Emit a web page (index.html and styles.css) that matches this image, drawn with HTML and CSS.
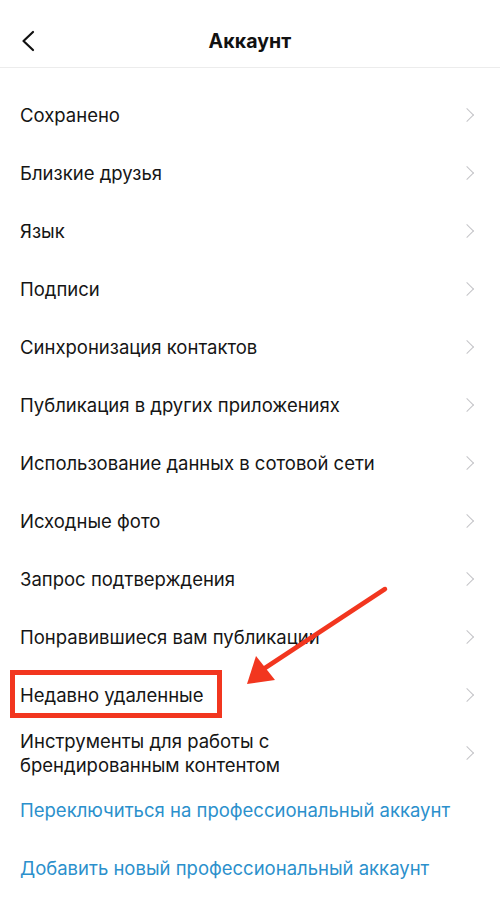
FILE: index.html
```html
<!DOCTYPE html>
<html lang="ru">
<head>
<meta charset="utf-8">
<title>Аккаунт</title>
<link rel="stylesheet" href="styles.css">
</head>
<body>
<div class="screen">
  <header class="header">
    <svg class="back" width="16" height="22" viewBox="0 0 16 22"><path d="M13 2 L3.5 11 L13 20" fill="none" stroke="#111" stroke-width="2.2" stroke-linecap="round" stroke-linejoin="round"/></svg>
    <h1 class="title">Аккаунт</h1>
  </header>
  <ul class="list">
    <li class="row"><span class="label">Сохранено</span><span class="chev"></span></li>
    <li class="row"><span class="label">Близкие друзья</span><span class="chev"></span></li>
    <li class="row"><span class="label">Язык</span><span class="chev"></span></li>
    <li class="row"><span class="label">Подписи</span><span class="chev"></span></li>
    <li class="row"><span class="label">Синхронизация контактов</span><span class="chev"></span></li>
    <li class="row"><span class="label">Публикация в других приложениях</span><span class="chev"></span></li>
    <li class="row"><span class="label">Использование данных в сотовой сети</span><span class="chev"></span></li>
    <li class="row"><span class="label">Исходные фото</span><span class="chev"></span></li>
    <li class="row"><span class="label">Запрос подтверждения</span><span class="chev"></span></li>
    <li class="row"><span class="label">Понравившиеся вам публикации</span><span class="chev"></span></li>
    <li class="row"><span class="label">Недавно удаленные</span><span class="chev"></span></li>
    <li class="row row-two"><span class="label">Инструменты для работы с<br>брендированным контентом</span><span class="chev"></span></li>
    <li class="row link">Переключиться на профессиональный аккаунт</li>
    <li class="row link">Добавить новый профессиональный аккаунт</li>
  </ul>
  <div class="highlight"></div>
  <svg class="arrow" width="500" height="915" viewBox="0 0 500 915">
    <line x1="385" y1="589" x2="262" y2="670" stroke="#f2361f" stroke-width="4.5" stroke-linecap="round"/>
    <polygon points="247,684 256,656 275,680" fill="#f2361f"/>
  </svg>
</div>
</body>
</html>
```
FILE: styles.css
```css
html, body {
  margin: 0;
  padding: 0;
  background: #ffffff;
}
body {
  font-family: "Inter", "Roboto", "Liberation Sans", sans-serif;
  color: #111111;
}
.screen {
  position: relative;
  width: 500px;
  height: 915px;
  overflow: hidden;
}
.header {
  position: relative;
  height: 52px;
  padding-top: 15px;
  border-bottom: 1px solid #ececec;
  display: flex;
  align-items: center;
  justify-content: center;
}
.back {
  position: absolute;
  left: 20px;
  top: 30px;
}
.title {
  margin: 0;
  font-size: 19.5px;
  font-weight: 700;
  color: #111;
  letter-spacing: 0.1px;
}
.list {
  list-style: none;
  margin: 0;
  padding: 18px 0 0 0;
}
.row {
  height: 58px;
  display: flex;
  align-items: center;
  justify-content: space-between;
  padding: 0 26px 0 20px;
  font-size: 18.5px;
  line-height: 24px;
  color: #151515;
}
.row-two {
  height: 57px;
}
.chev {
  width: 9px;
  height: 9px;
  border-right: 1.6px solid #c4c4c8;
  border-top: 1.6px solid #c4c4c8;
  transform: rotate(45deg);
  margin-right: 2px;
  flex: none;
}
.link {
  color: #2b90cc;
}
.highlight {
  position: absolute;
  left: 10px;
  top: 670px;
  width: 202px;
  height: 38px;
  border: 5px solid #f2361f;
}
.arrow {
  position: absolute;
  left: 0;
  top: 0;
  pointer-events: none;
}
```
